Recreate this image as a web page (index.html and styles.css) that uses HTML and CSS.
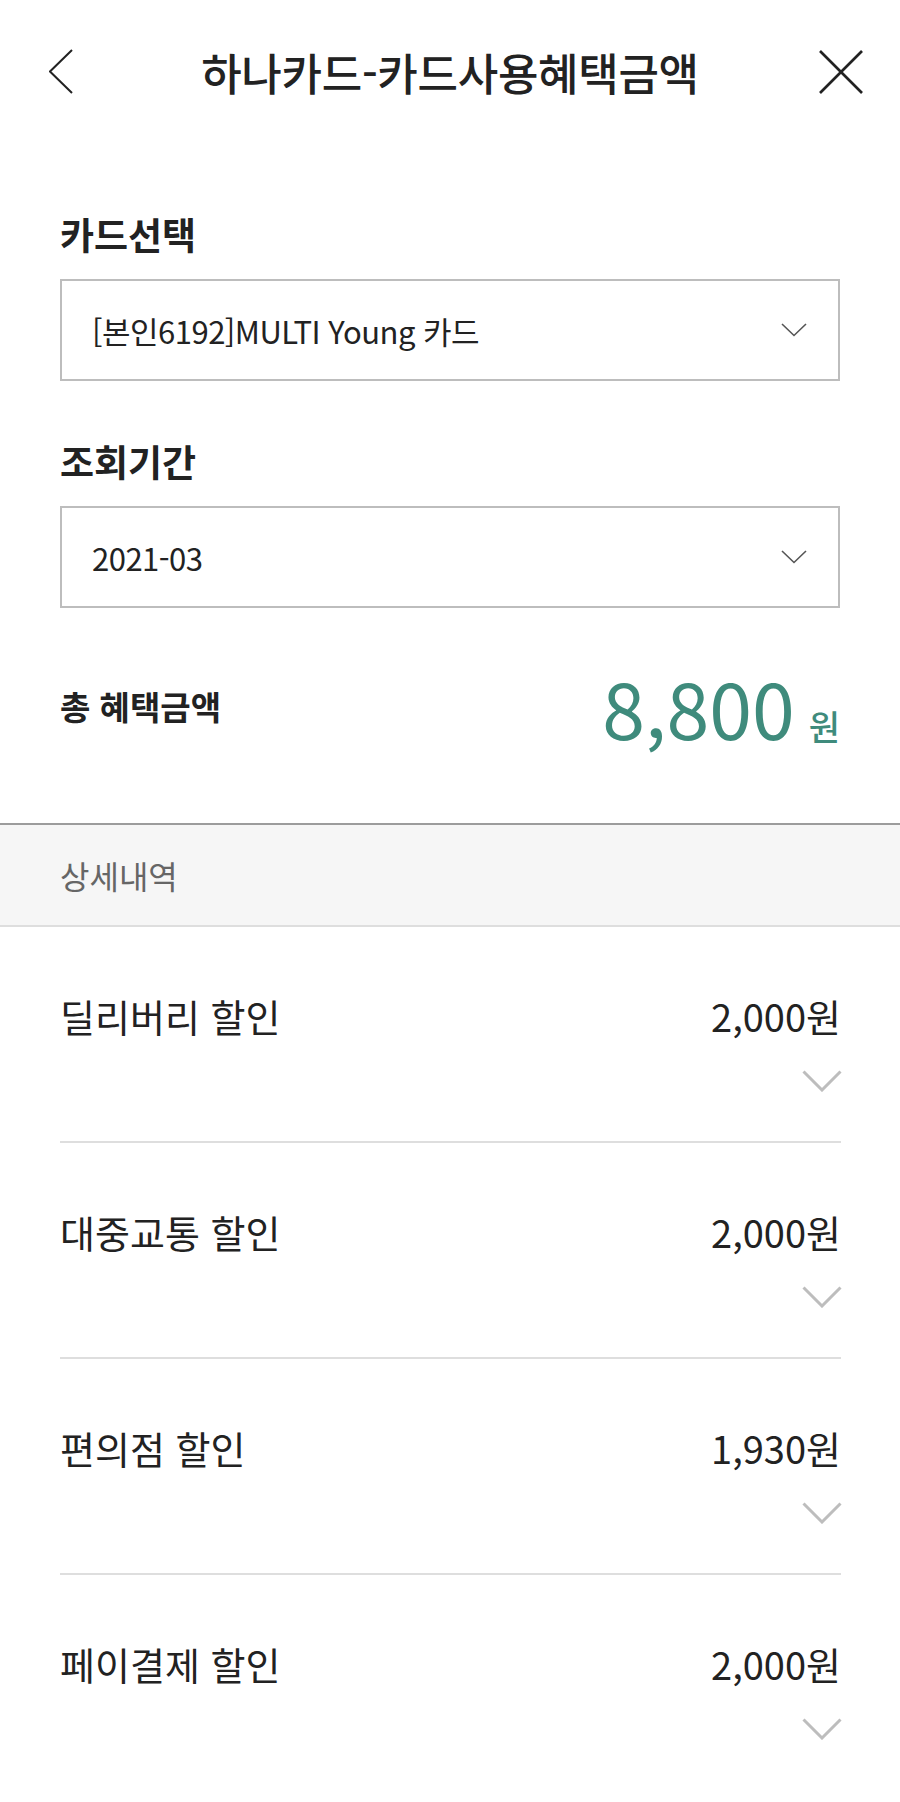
FILE: index.html
```html
<!DOCTYPE html>
<html lang="ko">
<head>
<meta charset="utf-8">
<title>하나카드-카드사용혜택금액</title>
<link rel="stylesheet" href="styles.css">
</head>
<body>
<div class="page">
  <header class="topbar">
    <button class="icon-btn back" aria-label="뒤로">
      <svg width="24" height="46" viewBox="0 0 24 46"><polyline points="23,1 1,22.5 23,44" fill="none" stroke="#222" stroke-width="2"/></svg>
    </button>
    <h1 class="title">하나카드-카드사용혜택금액</h1>
    <button class="icon-btn close" aria-label="닫기">
      <svg width="46" height="46" viewBox="0 0 46 46"><line x1="2" y1="2" x2="44" y2="44" stroke="#222" stroke-width="2.6"/><line x1="44" y1="2" x2="2" y2="44" stroke="#222" stroke-width="2.6"/></svg>
    </button>
  </header>

  <section class="form">
    <div class="field">
      <div class="label">카드선택</div>
      <div class="select">
        <span class="select-text">[본인6192]MULTI Young 카드</span>
        <svg class="select-arrow" width="26" height="14" viewBox="0 0 26 14"><polyline points="1,1 13,12.5 25,1" fill="none" stroke="#555" stroke-width="1.6"/></svg>
      </div>
    </div>
    <div class="field field-2">
      <div class="label">조회기간</div>
      <div class="select">
        <span class="select-text">2021-03</span>
        <svg class="select-arrow" width="26" height="14" viewBox="0 0 26 14"><polyline points="1,1 13,12.5 25,1" fill="none" stroke="#555" stroke-width="1.6"/></svg>
      </div>
    </div>
    <div class="total">
      <div class="total-label">총 혜택금액</div>
      <div class="total-amount"><span class="total-num">8,800</span><span class="total-unit">원</span></div>
    </div>
  </section>

  <div class="detail-head">상세내역</div>

  <ul class="benefits">
    <li class="benefit">
      <div class="benefit-row"><span class="benefit-name">딜리버리 할인</span><span class="benefit-amt">2,000원</span></div>
      <div class="benefit-toggle"><svg width="40" height="22" viewBox="0 0 40 22"><polyline points="1.5,1.5 20,20 38.5,1.5" fill="none" stroke="#bdbdbd" stroke-width="3"/></svg></div>
    </li>
    <li class="benefit">
      <div class="benefit-row"><span class="benefit-name">대중교통 할인</span><span class="benefit-amt">2,000원</span></div>
      <div class="benefit-toggle"><svg width="40" height="22" viewBox="0 0 40 22"><polyline points="1.5,1.5 20,20 38.5,1.5" fill="none" stroke="#bdbdbd" stroke-width="3"/></svg></div>
    </li>
    <li class="benefit">
      <div class="benefit-row"><span class="benefit-name">편의점 할인</span><span class="benefit-amt">1,930원</span></div>
      <div class="benefit-toggle"><svg width="40" height="22" viewBox="0 0 40 22"><polyline points="1.5,1.5 20,20 38.5,1.5" fill="none" stroke="#bdbdbd" stroke-width="3"/></svg></div>
    </li>
    <li class="benefit">
      <div class="benefit-row"><span class="benefit-name">페이결제 할인</span><span class="benefit-amt">2,000원</span></div>
      <div class="benefit-toggle"><svg width="40" height="22" viewBox="0 0 40 22"><polyline points="1.5,1.5 20,20 38.5,1.5" fill="none" stroke="#bdbdbd" stroke-width="3"/></svg></div>
    </li>
  </ul>
</div>
</body>
</html>
```

FILE: styles.css
```css
* { box-sizing: border-box; }
html, body { margin: 0; padding: 0; background: #fff; }
body {
  font-family: "Noto Sans CJK KR", "Noto Sans", sans-serif;
  color: #222;
}
.page { width: 900px; }

.topbar {
  height: 144px;
  display: grid;
  grid-template-columns: 1fr auto 1fr;
  align-items: center;
  padding: 0 36px;
}
.icon-btn {
  border: 0;
  background: none;
  padding: 0;
  margin: 0;
  display: flex;
  align-items: center;
}
.icon-btn svg { display: block; }
.back { justify-self: start; margin-left: 13px; }
.close { justify-self: end; }
.title {
  margin: 0;
  font-size: 44px;
  font-weight: 500;
  line-height: 1;
  color: #222;
  letter-spacing: -0.3px;
}

.form { padding: 0 60px; }
.label {
  margin-top: 66px;
  font-size: 37px;
  line-height: 48px;
  font-weight: 700;
  color: #222;
}
.field-2 .label { margin-top: 56px; }
.select {
  margin-top: 21px;
  height: 102px;
  border: 2px solid #bdbdbd;
  display: flex;
  align-items: center;
  justify-content: space-between;
  padding: 0 31px 0 30px;
}
.select-text {
  font-size: 31px;
  color: #222;
  letter-spacing: -0.5px;
}
.select-arrow { display: block; }

.total {
  margin-top: 60px;
  display: flex;
  justify-content: space-between;
  align-items: center;
  padding-bottom: 78px;
}
.total-label {
  font-size: 33px;
  font-weight: 700;
  line-height: 1;
}
.total-amount {
  display: flex;
  align-items: baseline;
  color: #3f8b7c;
  line-height: 1;
}
.total-num { font-size: 77px; }
.total-unit { font-size: 34px; margin-left: 14px; font-weight: 500; }

.detail-head {
  height: 104px;
  border-top: 2px solid #9c9c9c;
  border-bottom: 2px solid #dedede;
  background: #f6f6f6;
  display: flex;
  align-items: center;
  padding-left: 60px;
  font-size: 32px;
  color: #666;
}

.benefits {
  list-style: none;
  margin: 0;
  padding: 0 59px 0 60px;
}
.benefit {
  padding: 69px 0 50px;
  border-bottom: 2px solid #dedede;
}
.benefit:last-child { border-bottom: 0; }
.benefit-row {
  display: flex;
  justify-content: space-between;
  align-items: center;
  line-height: 40px;
  font-size: 38px;
  color: #222;
}
.benefit-toggle {
  margin-top: 35px;
  display: flex;
  justify-content: flex-end;
  height: 20px;
}
.benefit-toggle svg { display: block; margin-top: -1px; margin-right: -1px; }
```
